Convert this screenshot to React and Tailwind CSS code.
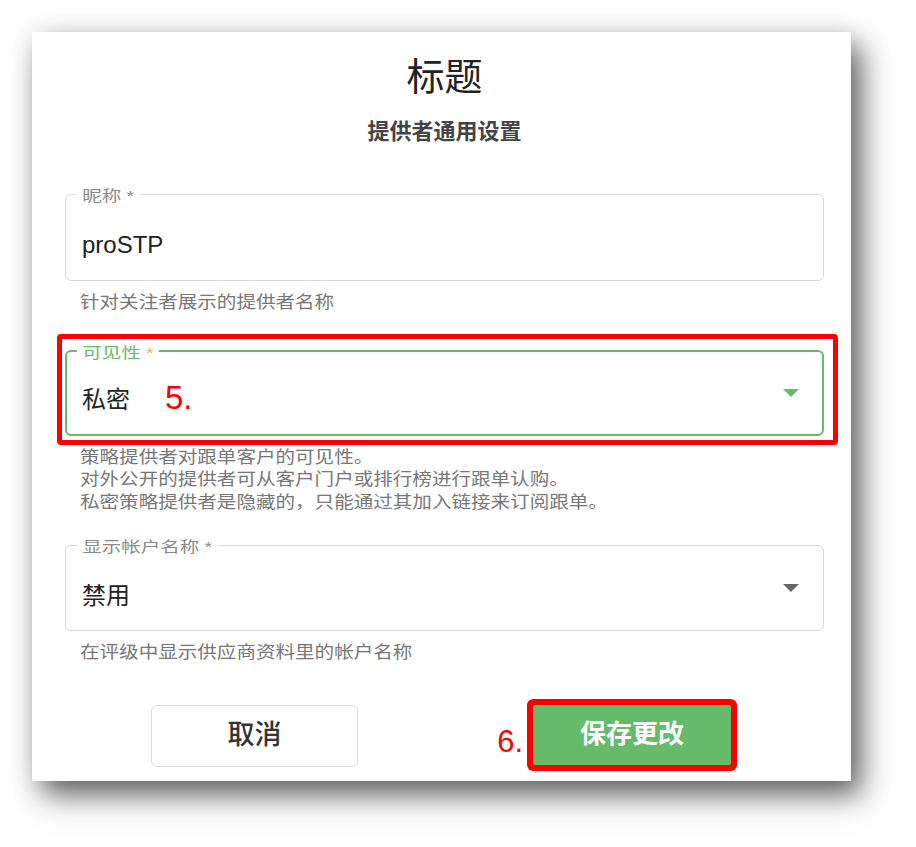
import React from "react";

function Arrow({ color }) {
  return (
    <svg width="16" height="8" viewBox="0 0 16 8" className="ml-auto shrink-0">
      <path d="M0 0H16L8 8Z" fill={color} />
    </svg>
  );
}

function Helper({ lines }) {
  return (
    <div className="mt-[11px] pl-[15px] text-[17px] leading-[22.5px] text-[#777]">
      {lines.map((l) => (
        <div key={l} className="origin-left scale-x-[1.15] whitespace-nowrap">
          {l}
        </div>
      ))}
    </div>
  );
}

export default function App() {
  return (
    <div className="w-[916px] h-[847px] bg-white pt-[32px] pl-[32px] font-['Liberation_Sans','Noto_Sans_CJK_SC',sans-serif]">
      <div className="w-[819px] h-[749px] bg-white shadow-[10px_14px_28px_rgba(0,0,0,0.62),0_0_22px_rgba(0,0,0,0.07)] flex flex-col pl-[33px] pr-[27px]">
        <h1 className="mt-[23px] text-center text-[38px] leading-[44px] text-[#222]">标题</h1>
        <h2 className="mt-[19px] text-center text-[22px] leading-[28px] font-semibold text-[#444]">提供者通用设置</h2>

        {/* Field 1 */}
        <div className="relative mt-[48px] h-[87px] border border-[#dadada] rounded-[6px] flex items-center pl-[16px] pr-[24px]">
          <span className="absolute left-[11px] top-[-8px] inline-block origin-left scale-x-[1.3] bg-white px-[4px] text-[15px] leading-[18px] text-[#8a8a8a] whitespace-nowrap">
            昵称 *
          </span>
          <span className="mt-[14px] text-[24px] leading-[30px] text-[#222]">proSTP</span>
        </div>
        <Helper lines={["针对关注者展示的提供者名称"]} />

        {/* Field 2 */}
        <div className="relative mt-[35px] h-[86px] border-2 border-[#66bb6a] rounded-[6px] flex items-center pl-[15px] pr-[23px]">
          <span className="absolute left-[10px] top-[-8px] inline-block origin-left scale-x-[1.3] bg-white px-[4px] text-[15px] leading-[18px] text-[#66bb6a] whitespace-nowrap">
            可见性 <span className="text-[#f0ad4e]">*</span>
          </span>
          <span className="mt-[14px] text-[24px] leading-[30px] text-[#222]">私密</span>
          <span className="mt-[10px] ml-[35px] text-[33px] leading-[33px] text-[#ff0000]">5.</span>
          <Arrow color="#66bb6a" />
          <div className="pointer-events-none absolute left-[-10px] right-[-16px] top-[-18px] bottom-[-11px] border-[5px] border-[#ff0000] rounded-[4px]" />
        </div>
        <Helper
          lines={[
            "策略提供者对跟单客户的可见性。",
            "对外公开的提供者可从客户门户或排行榜进行跟单认购。",
            "私密策略提供者是隐藏的，只能通过其加入链接来订阅跟单。",
          ]}
        />

        {/* Field 3 */}
        <div className="relative mt-[31px] h-[86px] border border-[#dadada] rounded-[6px] flex items-center pl-[16px] pr-[24px]">
          <span className="absolute left-[11px] top-[-8px] inline-block origin-left scale-x-[1.3] bg-white px-[4px] text-[15px] leading-[18px] text-[#8a8a8a] whitespace-nowrap">
            显示帐户名称 *
          </span>
          <span className="mt-[16px] text-[24px] leading-[30px] text-[#222]">禁用</span>
          <Arrow color="#666" />
        </div>
        <Helper lines={["在评级中显示供应商资料里的帐户名称"]} />

        {/* Buttons */}
        <div className="mt-[40px] flex items-start pl-[86px] gap-[175px]">
          <button className="w-[207px] h-[62px] border border-[#dcdcdc] rounded-[6px] bg-white text-[27px] font-medium text-[#333]">
            取消
          </button>
          <button className="relative w-[198px] h-[60px] bg-[#66bb6a] text-white text-[26px] font-bold rounded-[2px] ring-[6px] ring-[#ff0000]">
            保存更改
            <span className="absolute right-full mr-[10px] top-[21px] text-[31px] leading-[31px] font-normal text-[#ff0000]">
              6.
            </span>
          </button>
        </div>
      </div>
    </div>
  );
}
